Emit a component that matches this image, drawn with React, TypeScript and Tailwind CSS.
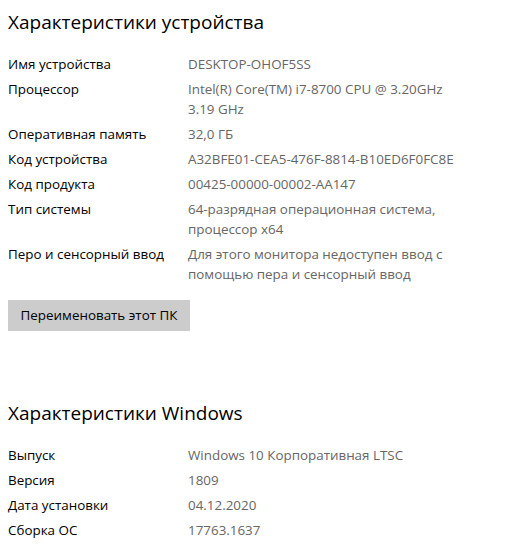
import React from "react";

const device: [string, string[]][] = [
  ["Имя устройства", ["DESKTOP-OHOF5SS"]],
  ["Процессор", ["Intel(R) Core(TM) i7-8700 CPU @ 3.20GHz", "3.19 GHz"]],
  ["Оперативная память", ["32,0 ГБ"]],
  ["Код устройства", ["A32BFE01-CEA5-476F-8814-B10ED6F0FC8E"]],
  ["Код продукта", ["00425-00000-00002-AA147"]],
  ["Тип системы", ["64-разрядная операционная система,", "процессор x64"]],
  ["Перо и сенсорный ввод", ["Для этого монитора недоступен ввод с", "помощью пера и сенсорный ввод"]],
];

const windows: [string, string[]][] = [
  ["Выпуск", ["Windows 10 Корпоративная LTSC"]],
  ["Версия", ["1809"]],
  ["Дата установки", ["04.12.2020"]],
  ["Сборка ОС", ["17763.1637"]],
];

function Rows({ items }: { items: [string, string[]][] }) {
  return (
    <div className="flex flex-col gap-[5px]">
      {items.map(([label, value]) => (
        <div key={label} className="flex text-[13.4px] leading-[20px]">
          <div className="w-[180px] shrink-0 text-black">{label}</div>
          <div className="text-[#666666]">
            {value.map((v) => (
              <div key={v}>{v}</div>
            ))}
          </div>
        </div>
      ))}
    </div>
  );
}

export default function App() {
  return (
    <div className="w-[528px] h-[544px] bg-white px-2 pt-[8px] overflow-hidden" style={{ fontFamily: '"Open Sans", "Noto Sans", sans-serif' }}>
      <h1 className="text-[19px] leading-[28px] text-black">Характеристики устройства</h1>
      <div className="mt-[18px]">
        <Rows items={device} />
      </div>
      <button className="mt-[16px] h-[31px] w-[182px] bg-[#cccccc] text-[13.4px] text-black">
        Переименовать этот ПК
      </button>
      <h1 className="mt-[68px] text-[19px] leading-[28px] text-black">Характеристики Windows</h1>
      <div className="mt-[18px]">
        <Rows items={windows} />
      </div>
    </div>
  );
}
